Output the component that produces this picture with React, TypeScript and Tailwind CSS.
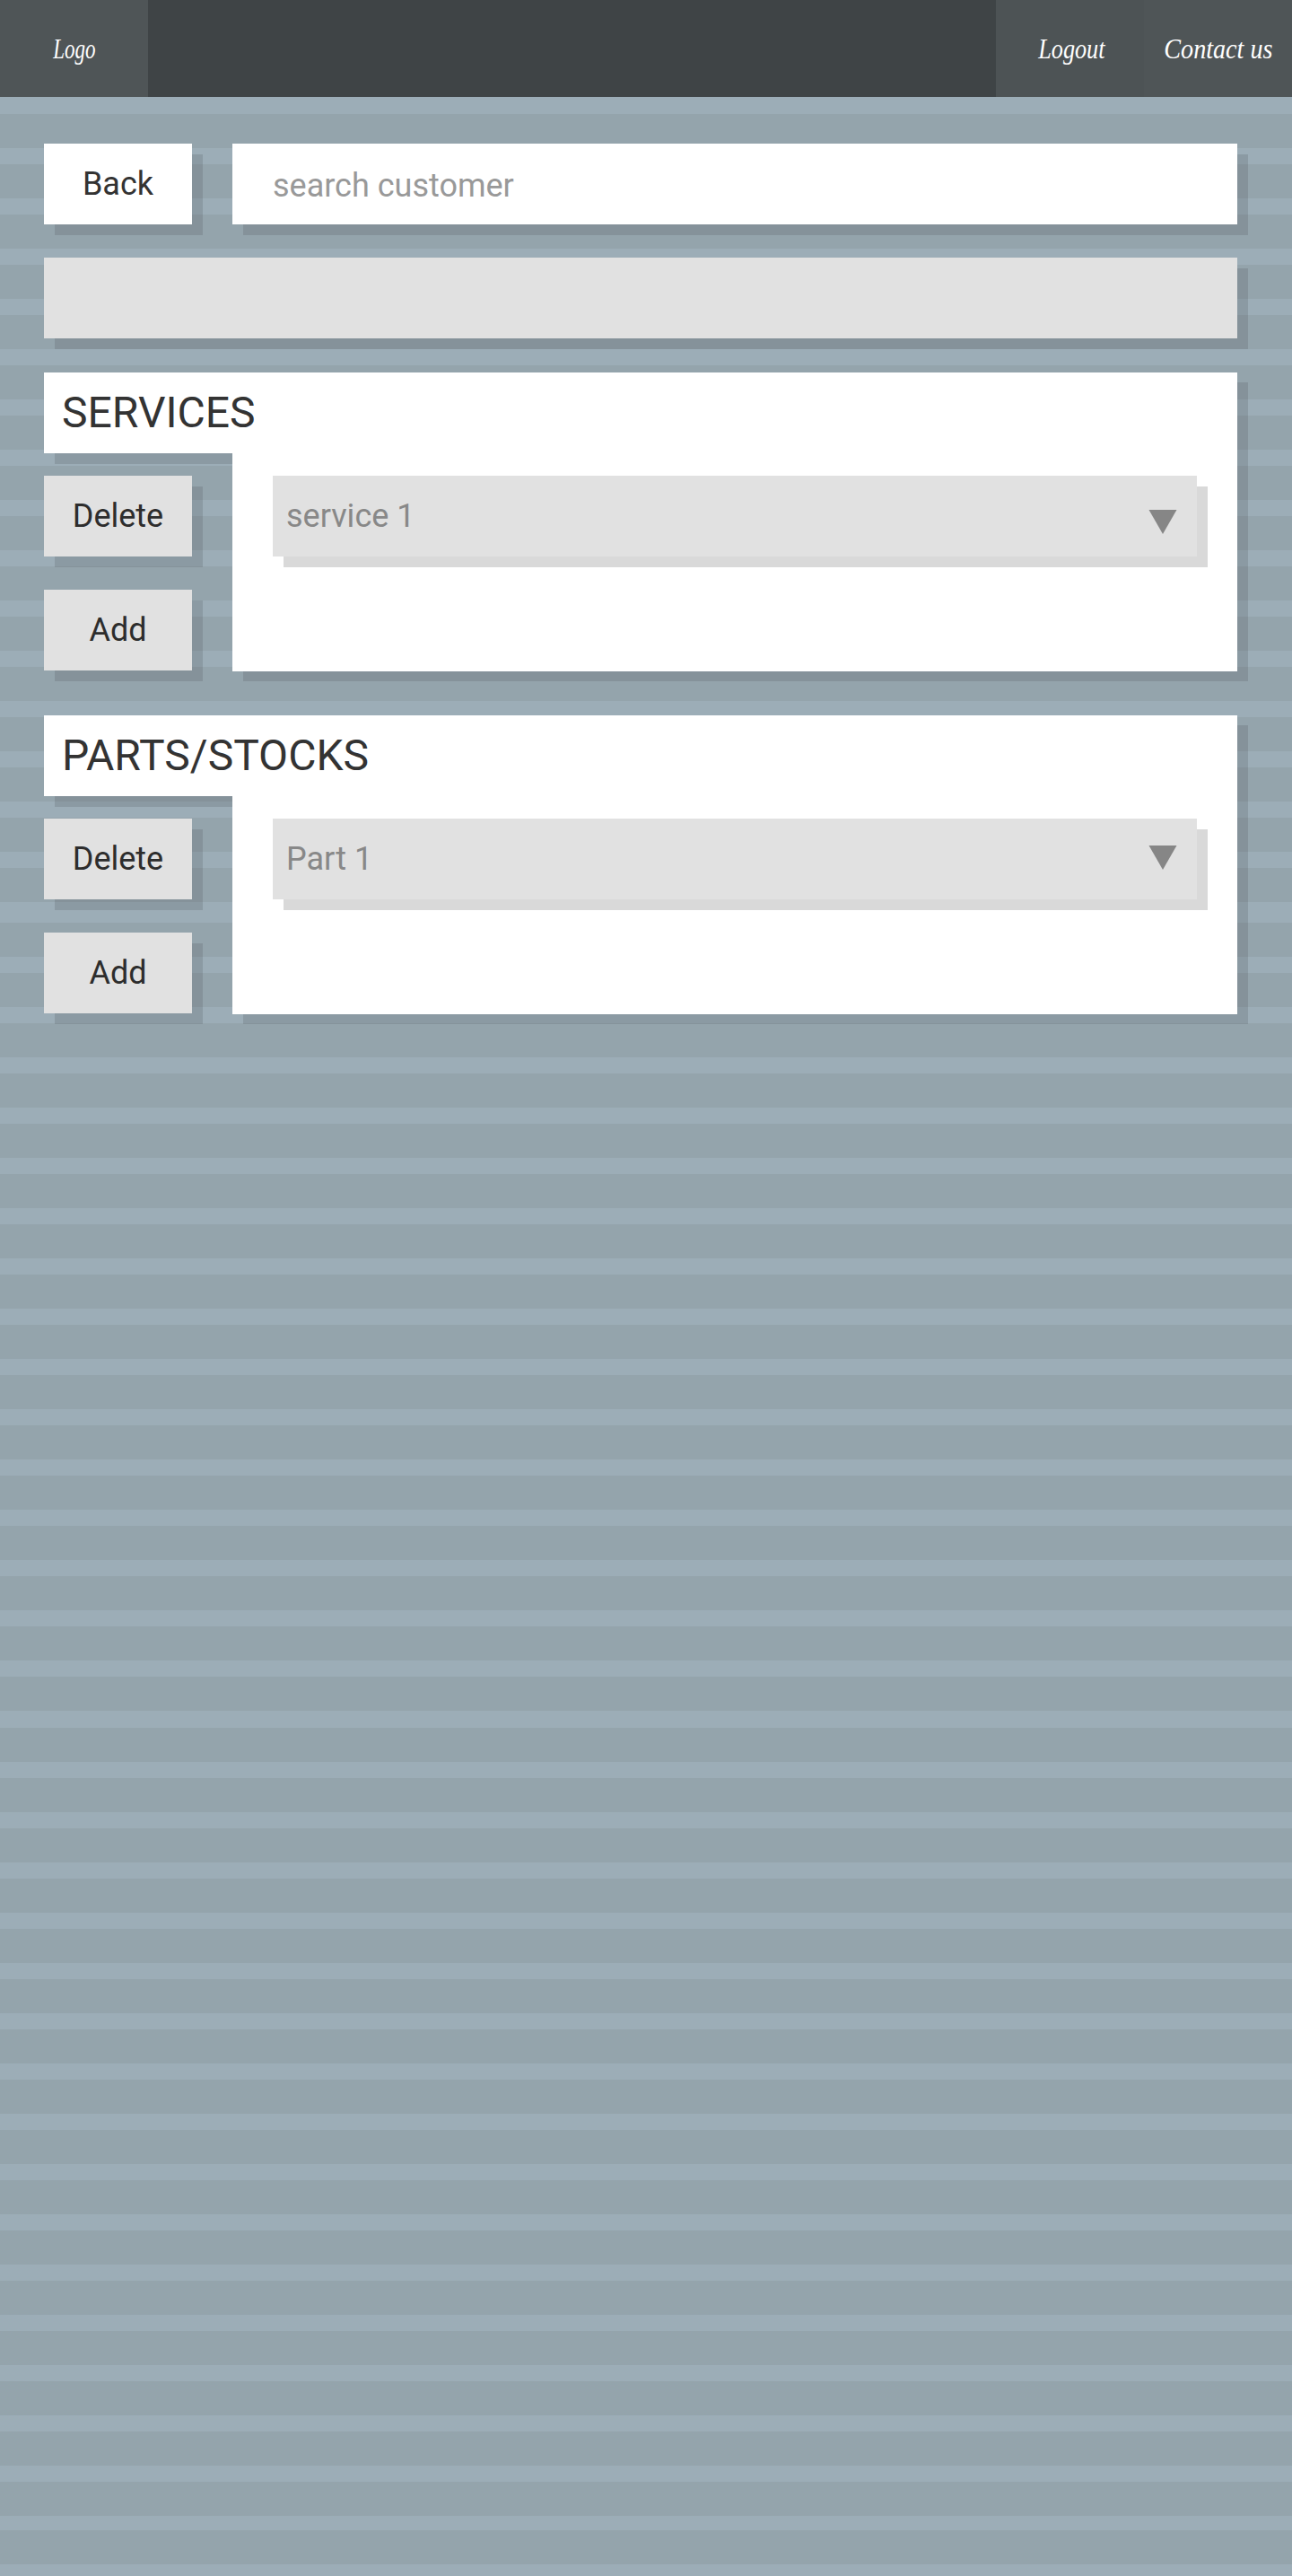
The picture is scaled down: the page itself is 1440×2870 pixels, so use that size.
import React from 'react';

const SHADOW = 'shadow-[12px_12px_0_rgba(45,45,55,0.15)]';

// Top offsets of the darker background bands.
const bands = [
  127, 183, 239, 295, 351, 407, 463, 519, 575, 631, 687, 743, 799, 855, 911, 967, 1028,
  1084, 1140, 1196, 1252, 1308, 1364, 1420, 1476, 1532, 1588, 1644, 1700, 1756, 1812, 1868,
  1925, 1981, 2037, 2093, 2149, 2205, 2261, 2317, 2373, 2429, 2485, 2541, 2597, 2653, 2709,
  2765, 2819,
];

function Stripes() {
  return (
    <div className="absolute inset-0 overflow-hidden bg-[#9cadb7]" aria-hidden>
      {bands.map((top, i) => (
        <div
          key={top}
          className="h-[38px] bg-[#94a4ac]"
          style={{ marginTop: i === 0 ? top : top - bands[i - 1] - 38 }}
        />
      ))}
    </div>
  );
}

function NavItem({ label, className, textClass }: { label: string; className: string; textClass: string }) {
  return (
    <a
      className={`flex w-[165px] items-center justify-center font-['Liberation_Serif',serif] text-[32px] whitespace-nowrap italic text-white ${className}`}
    >
      <span className={`inline-block ${textClass}`}>{label}</span>
    </a>
  );
}

function SideButton({ children }: { children: string }) {
  return (
    <button className={`h-[90px] w-[165px] bg-[#e1e1e1] text-4xl text-[#2d2d2d] ${SHADOW}`}>
      {children}
    </button>
  );
}

function Section({ title, item, arrow }: { title: string; item: string; arrow: string }) {
  return (
    <section>
      <div className="flex">
        <h2 className={`h-[90px] w-[210px] bg-white pl-5 pt-[15px] text-5xl leading-[60px] whitespace-nowrap text-[#333] ${SHADOW}`}>
          <span className="relative z-10">{title}</span>
        </h2>
        <div className="relative h-[90px] w-[1120px] bg-white" />
      </div>
      <div className="-mt-[90px] flex">
        <div className="mt-[115px] flex w-[210px] flex-col gap-[37px]">
          <SideButton>Delete</SideButton>
          <SideButton>Add</SideButton>
        </div>
        <div className="h-[333px] w-[1120px] bg-white pt-[115px] pl-[45px] shadow-[12px_11px_0_rgba(45,45,55,0.15)]">
          <div className="flex h-[90px] w-[1030px] justify-between bg-[#e1e1e1] pr-[22px] pl-[15px] shadow-[12px_12px_0_#d9d9d9]">
            <span className="text-4xl leading-[90px] text-[#888]">{item}</span>
            <svg className={`h-[28px] w-[32px] ${arrow}`} viewBox="0 0 32 28">
              <path d="M0.5 0H31.5L16 27Z" fill="#868686" />
            </svg>
          </div>
        </div>
      </div>
    </section>
  );
}

export default function App() {
  return (
    <div className="relative h-[2870px] w-[1440px] overflow-hidden font-[Roboto,sans-serif]">
      <Stripes />
      <div className="relative">
        <header className="flex h-[108px] bg-[#3f4446]">
          <NavItem label="Logo" className="bg-[#4f5557]" textClass="scale-x-[0.72]" />
          <div className="grow" />
          <NavItem label="Logout" className="bg-[#4d5355] pl-1" textClass="scale-x-[0.82]" />
          <NavItem label="Contact us" className="bg-[#4f5557]" textClass="scale-x-[0.88]" />
        </header>
        <main className="flex flex-col px-[49px] pt-[52px]">
          <div className="flex gap-[45px]">
            <button className={`h-[90px] w-[165px] bg-white text-4xl text-[#333] ${SHADOW}`}>Back</button>
            <input
              className={`h-[90px] w-[1120px] bg-white px-[45px] pt-1 text-4xl text-[#333] outline-none placeholder:text-[#999] ${SHADOW}`}
              placeholder="search customer"
            />
          </div>
          <div className={`mt-[37px] h-[90px] w-[1330px] bg-[#e1e1e1] ${SHADOW}`} />
          <div className="mt-[38px] flex flex-col gap-[49px]">
            <Section title="SERVICES" item="service 1" arrow="mt-[38px]" />
            <Section title="PARTS/STOCKS" item="Part 1" arrow="mt-[30px]" />
          </div>
        </main>
      </div>
    </div>
  );
}
